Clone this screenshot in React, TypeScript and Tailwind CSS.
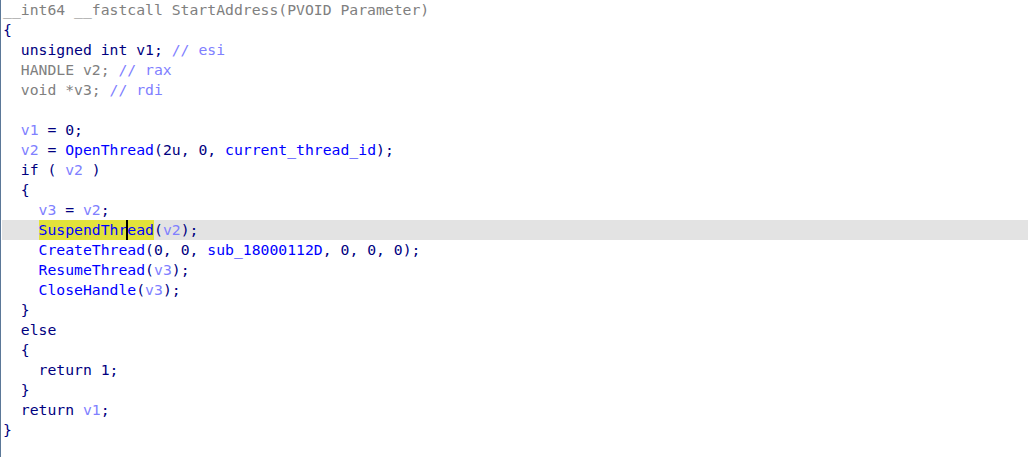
import React from "react";

type Tok = [string, string];

const K = "text-[#000080]"; // keywords, punctuation, numbers
const V = "text-[#8080ff]"; // local variables
const F = "text-[#0000ff]"; // names
const G = "text-[#808080]"; // declarations / header
const C = "text-[#8080ff]"; // comments

const lines: Tok[][] = [
    [["__int64 __fastcall StartAddress(PVOID Parameter)", G]],
    [["{", K]],
    [["  unsigned int v1; ", K], ["// esi", C]],
    [["  HANDLE v2; ", G], ["// rax", C]],
    [["  void *v3; ", G], ["// rdi", C]],
    [],
    [["  ", K], ["v1", V], [" = 0;", K]],
    [["  ", K], ["v2", V], [" = ", K], ["OpenThread", F], ["(2u, 0, ", K], ["current_thread_id", F], [");", K]],
    [["  if ( ", K], ["v2", V], [" )", K]],
    [["  {", K]],
    [["    ", K], ["v3", V], [" = ", K], ["v2", V], [";", K]],
    [], // SuspendThread line, drawn separately
    [["    ", K], ["CreateThread", F], ["(0, 0, ", K], ["sub_18000112D", F], [", 0, 0, 0);", K]],
    [["    ", K], ["ResumeThread", F], ["(", K], ["v3", V], [");", K]],
    [["    ", K], ["CloseHandle", F], ["(", K], ["v3", V], [");", K]],
    [["  }", K]],
    [["  else", K]],
    [["  {", K]],
    [["    return 1;", K]],
    [["  }", K]],
    [["  return ", K], ["v1", V], [";", K]],
    [["}", K]],
];

const Line = ({ toks }: { toks: Tok[] }) => (
    <div className="h-5 leading-5 pl-[1px] whitespace-pre">
        {toks.map(([t, c], i) => (
            <span key={i} className={c}>
                {t}
            </span>
        ))}
    </div>
);

const CurrentLine = () => (
    <div className="h-5 leading-5 pl-[1px] whitespace-pre bg-[#e3e3e3] flex">
        <span>{"    "}</span>
        <span className="bg-[#e2e23a] text-[#0000ff] flex">
            <span>SuspendThr</span>
            <span className="relative">
                <span className="absolute left-[-1px] top-0 h-5 w-[2px] bg-black" />
                ead
            </span>
        </span>
        <span className={K}>(</span>
        <span className={V}>v2</span>
        <span className={K}>);</span>
    </div>
);

export default function App() {
    return (
        <main className="w-[1028px] h-[457px] bg-white overflow-hidden">
            <div className="h-full border-l border-[#5b7898] pl-[1px] font-['DejaVu_Sans_Mono',monospace] text-[14.75px]">
                {lines.map((l, i) =>
                    i === 11 ? <CurrentLine key={i} /> : <Line key={i} toks={l} />
                )}
            </div>
        </main>
    );
}
